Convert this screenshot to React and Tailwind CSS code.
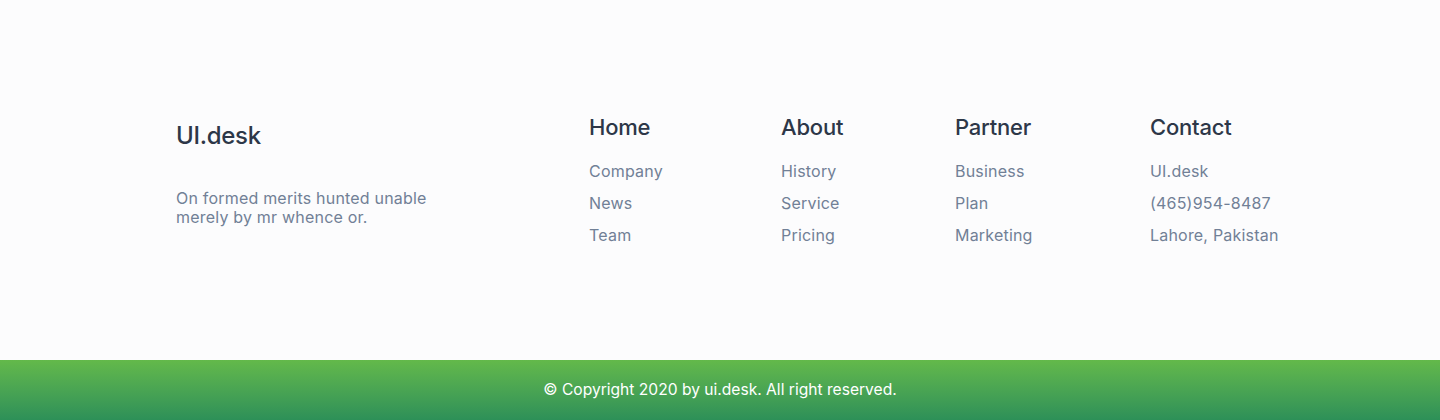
export default function App() {
  const font = { fontFamily: 'Inter, "Open Sans", sans-serif' };
  const cols = [
    { t: "Home", w: "w-[192px]", items: ["Company", "News", "Team"] },
    { t: "About", w: "w-[174px]", items: ["History", "Service", "Pricing"] },
    { t: "Partner", w: "w-[195px]", items: ["Business", "Plan", "Marketing"] },
    { t: "Contact", w: "w-[150px]", items: ["UI.desk", "(465)954-8487", "Lahore, Pakistan"] },
  ];
  return (
    <div className="w-[1440px] h-[420px] bg-[#fcfcfd] flex flex-col" style={font}>
      <div className="h-[360px] flex pl-[176px] pt-[112px]">
        <div className="w-[413px]">
          <div className="text-[24px] font-medium tracking-[-0.3px] text-[#2d3748] leading-[30px] mt-[9px]">UI.desk</div>
          <p className="mt-[38px] text-[16px] tracking-[0.2px] leading-[19px] text-[#718096] w-[280px]">
            On formed merits hunted unable merely by mr whence or.
          </p>
        </div>
        {cols.map((c) => (
          <div key={c.t} className={c.w}>
            <div className="text-[22px] font-medium tracking-[-0.2px] text-[#2d3748] leading-[30px]">{c.t}</div>
            <ul className="mt-[19px] flex flex-col gap-[12px]">
              {c.items.map((i) => (
                <li key={i} className="text-[16px] tracking-[0.2px] leading-[20px] text-[#718096]">{i}</li>
              ))}
            </ul>
          </div>
        ))}
      </div>
      <div className="h-[60px] bg-gradient-to-b from-[#63b94a] to-[#2d9058] flex items-center justify-center">
        <span className="text-white text-[15.6px]">© Copyright 2020 by ui.desk. All right reserved.</span>
      </div>
    </div>
  );
}
